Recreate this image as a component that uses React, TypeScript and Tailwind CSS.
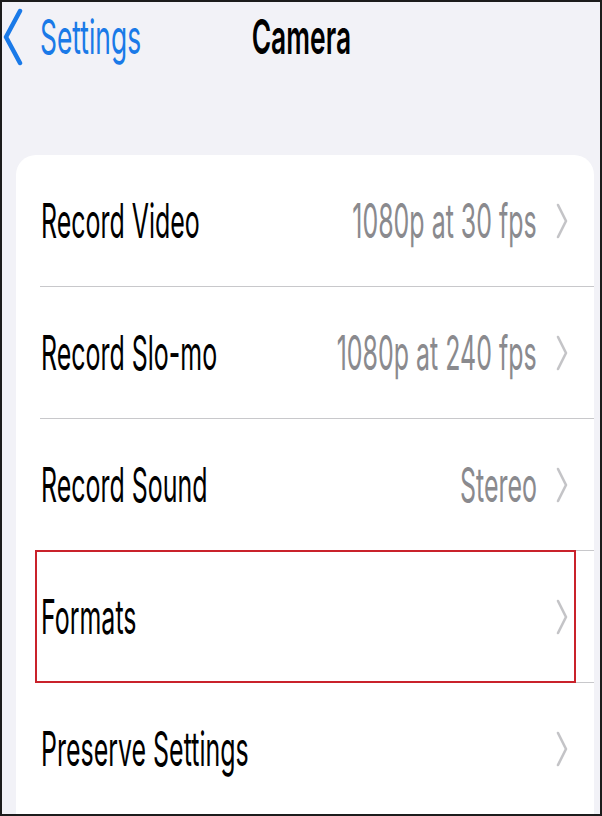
import React from 'react';

const font = { fontFamily: 'Inter, "Liberation Sans", sans-serif' };

type Row = { label: string; value?: string; marked?: boolean };

const rows: Row[] = [
  { label: 'Record Video', value: '1080p at 30 fps' },
  { label: 'Record Slo-mo', value: '1080p at 240 fps' },
  { label: 'Record Sound', value: 'Stereo' },
  { label: 'Formats', marked: true },
  { label: 'Preserve Settings' },
];

const Chevron = () => (
  <svg width="12" height="36" viewBox="0 0 12 36" className="shrink-0">
    <path d="M2 2 L10 18 L2 34" fill="none" stroke="#c4c4c7" strokeWidth="2.6" strokeLinecap="round" strokeLinejoin="round" />
  </svg>
);

const SettingsRow: React.FC<{ row: Row; last: boolean }> = ({ row, last }) => (
  <div className={`relative ml-[24px] h-[132px] ${last ? '' : 'border-b border-[#c8c8cb]'}`}>
    {row.marked && (
      <div className="absolute -top-px -bottom-px left-[-5px] w-[541px] border-2 border-[#c9222b]" />
    )}
    <div className="flex h-full items-center pl-px pr-[26px]">
      <div className="flex min-w-0 flex-1 basis-0">
        <span className="origin-left scale-x-[0.52] whitespace-nowrap text-[48px] leading-none text-black">
          {row.label}
        </span>
      </div>
      <div className="flex min-w-0 flex-1 basis-0 items-center justify-end gap-[19px]">
        {row.value && (
          <span className="origin-right scale-x-[0.52] whitespace-nowrap text-[48px] leading-none text-[#8a8a8e]">
            {row.value}
          </span>
        )}
        <Chevron />
      </div>
    </div>
  </div>
);

export default function App() {
  return (
    <div
      className="relative h-[816px] w-[602px] overflow-hidden border-2 border-[#1c1c1c] bg-[#f2f2f7]"
      style={font}
    >
      <div className="flex h-[70px] items-center">
        <div className="flex min-w-0 flex-1 basis-0 items-center gap-[16px]">
          <svg width="22" height="58" viewBox="0 0 22 58" className="shrink-0">
            <path d="M18 3 L4 29 L18 55" fill="none" stroke="#1a7ae8" strokeWidth="4.5" strokeLinecap="round" strokeLinejoin="round" />
          </svg>
          <span className="origin-left scale-x-[0.55] whitespace-nowrap text-[48px] leading-none text-[#1a7ae8]">
            Settings
          </span>
        </div>
        <span className="origin-center scale-x-[0.55] whitespace-nowrap text-[48px] font-semibold leading-none text-black">
          Camera
        </span>
        <div className="flex-1 basis-0" />
      </div>

      <div className="ml-[14px] mr-[6px] mt-[83px] rounded-t-[20px] bg-white pb-[20px]">
        {rows.map((row, i) => (
          <SettingsRow key={row.label} row={row} last={i === rows.length - 1} />
        ))}
      </div>
    </div>
  );
}
